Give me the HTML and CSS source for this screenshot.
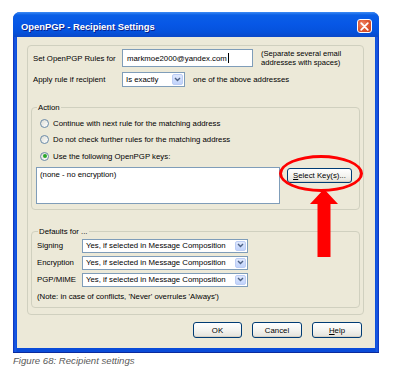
FILE: index.html
```html
<!DOCTYPE html>
<html>
<head>
<meta charset="utf-8">
<title>OpenPGP - Recipient Settings</title>
<link rel="stylesheet" href="styles.css">
</head>
<body>
<div class="figure">
  <div class="window">
    <div class="titlebar">
      <span class="title">OpenPGP - Recipient Settings</span>
      <span class="close"><svg width="9" height="9" viewBox="0 0 9 9"><path d="M1.2 1.2L7.8 7.8M7.8 1.2L1.2 7.8" stroke="#fff" stroke-width="1.7" stroke-linecap="round"/></svg></span>
    </div>
    <div class="client">
      <div class="outer">
        <div class="rulegrid">
          <span class="lbl">Set OpenPGP Rules for</span>
          <div class="input">markmoe2000@yandex.com<span class="caret"></span></div>
          <span class="hint">(Separate several email<br>addresses with spaces)</span>
          <span class="lbl">Apply rule if recipient</span>
          <div class="apply">
            <div class="select small"><span class="val">Is exactly</span><span class="dd"><svg width="7" height="5" viewBox="0 0 7 5"><path d="M1 1L3.5 3.5L6 1" stroke="#4d6185" stroke-width="1.4" fill="none"/></svg></span></div>
            <span>one of the above addresses</span>
          </div>
        </div>
        <fieldset class="group action">
          <legend>Action</legend>
          <div class="radio"><span class="rb"></span><span>Continue with next rule for the matching address</span></div>
          <div class="radio"><span class="rb"></span><span>Do not check further rules for the matching address</span></div>
          <div class="radio"><span class="rb on"></span><span>Use the following OpenPGP keys:</span></div>
          <div class="keys">
            <div class="listbox">(none - no encryption)</div>
            <div class="btn selkey"><u>S</u>elect Key(s)...</div>
          </div>
        </fieldset>
        <fieldset class="group defaults">
          <legend>Defaults for ...</legend>
          <div class="defgrid">
            <span>Signing</span>
            <div class="select wide"><span class="val">Yes, if selected in Message Composition</span><span class="dd"><svg width="7" height="5" viewBox="0 0 7 5"><path d="M1 1L3.5 3.5L6 1" stroke="#4d6185" stroke-width="1.4" fill="none"/></svg></span></div>
            <span>Encryption</span>
            <div class="select wide"><span class="val">Yes, if selected in Message Composition</span><span class="dd"><svg width="7" height="5" viewBox="0 0 7 5"><path d="M1 1L3.5 3.5L6 1" stroke="#4d6185" stroke-width="1.4" fill="none"/></svg></span></div>
            <span>PGP/MIME</span>
            <div class="select wide"><span class="val">Yes, if selected in Message Composition</span><span class="dd"><svg width="7" height="5" viewBox="0 0 7 5"><path d="M1 1L3.5 3.5L6 1" stroke="#4d6185" stroke-width="1.4" fill="none"/></svg></span></div>
          </div>
          <div class="note">(Note: in case of conflicts, 'Never' overrules 'Always')</div>
        </fieldset>
      </div>
      <div class="buttons">
        <div class="btn dlg">OK</div>
        <div class="btn dlg">Cancel</div>
        <div class="btn dlg"><u>H</u>elp</div>
      </div>
    </div>
  </div>
  <div class="caption">Figure 68: Recipient settings</div>
  <div class="ring"></div>
  <svg class="arrow" width="30" height="70" viewBox="0 0 30 70"><path d="M15 0L29 15H21.5V68H8.5V15H1Z" fill="#f00"/></svg>
</div>
</body>
</html>
```
FILE: styles.css
```css
body {
  margin: 0;
  background: #fff;
  font-family: "Liberation Sans", Arial, sans-serif;
  font-size: 7.8px;
  color: #000;
}
.figure {
  position: relative;
  width: 394px;
  height: 373px;
  padding: 12px 0 0 13px;
  box-sizing: border-box;
}
.window {
  width: 366px;
  height: 341px;
  box-sizing: border-box;
  padding: 0 4px 5px 4px;
  border-radius: 7px 7px 0 0;
  background: linear-gradient(to right, #0a2fb8 0, #1a5ce6 2px, #0a4bd8 4px, #0a4bd8 calc(100% - 4px), #1a5ce6 calc(100% - 2px), #0a2fb8 100%);
  box-shadow: inset 0 -1px 0 #0a2a9c;
  display: flex;
  flex-direction: column;
}
.titlebar {
  height: 25px;
  flex: none;
  margin: 0 -4px;
  padding: 3px 7px 0 8px;
  box-sizing: border-box;
  border-radius: 7px 7px 0 0;
  background: linear-gradient(#3d8cf5 0, #0a5fe6 3px, #0757e6 12px, #0552dc 20px, #0a48c8 25px);
  display: flex;
  align-items: center;
  justify-content: space-between;
}
.title {
  color: #fff;
  font-weight: bold;
  font-size: 9.4px;
  text-shadow: 1px 1px 0 #0a1f8a;
}
.close {
  width: 15px;
  height: 14px;
  box-sizing: border-box;
  border: 1px solid #fff;
  border-radius: 3px;
  background: radial-gradient(circle at 35% 35%, #f08a6a 0, #e05a34 45%, #c7401c 100%);
  display: flex;
  align-items: center;
  justify-content: center;
}
.client {
  flex: 1;
  background: #ece9d8;
  padding: 8px 13px 10px 10px;
  display: flex;
  flex-direction: column;
}
.outer {
  width: 337px;
  height: 270px;
  box-sizing: border-box;
  border: 1px solid #d0d0bf;
  border-radius: 4px;
  padding: 3px 3px 0 3px;
  display: flex;
  flex-direction: column;
}
.rulegrid {
  display: grid;
  grid-template-columns: 81px 131px auto;
  column-gap: 8px;
  row-gap: 5px;
  padding-left: 2px;
  align-items: center;
}
.lbl { white-space: nowrap; }
.input {
  height: 18px;
  box-sizing: border-box;
  border: 1px solid #7f9db9;
  background: #fff;
  padding-left: 4px;
  display: flex;
  align-items: center;
}
.caret {
  display: inline-block;
  width: 1px;
  height: 10px;
  background: #000;
  margin-left: 1px;
}
.hint {
  font-size: 7.6px;
  line-height: 9px;
}
.apply {
  grid-column: 2 / 4;
  display: flex;
  align-items: center;
  gap: 8px;
  white-space: nowrap;
}
.select {
  box-sizing: border-box;
  border: 1px solid #7f9db9;
  background: #fff;
  display: flex;
  align-items: center;
  padding: 1px;
}
.select .val {
  flex: 1;
  padding-left: 2px;
  white-space: nowrap;
  overflow: hidden;
}
.select.small { width: 63px; height: 15px; }
.select.wide { width: 166px; height: 14px; }
.dd {
  width: 11px;
  align-self: stretch;
  box-sizing: border-box;
  border: 1px solid #bccdf5;
  border-radius: 2px;
  background: linear-gradient(#dfe8fd, #c1d3fb);
  display: flex;
  align-items: center;
  justify-content: center;
}
.group {
  margin: 0;
  border: 1px solid #d0d0bf;
  border-radius: 4px;
  padding: 0 7px 5px 4px;
}
.group legend {
  padding: 0 1px;
  margin-left: 1px;
  line-height: 9px;
}
.action {
  margin-top: 16px;
}
.radio {
  display: flex;
  align-items: center;
  gap: 4px;
  margin-left: 4px;
  height: 16.5px;
}
.radio:first-of-type { margin-top: 3px; }
.rb {
  width: 9px;
  height: 9px;
  box-sizing: border-box;
  border-radius: 50%;
  border: 1px solid #6a8aa8;
  background: linear-gradient(135deg, #dcdcd4, #ffffff);
  display: flex;
  align-items: center;
  justify-content: center;
}
.rb.on::after {
  content: "";
  width: 4px;
  height: 4px;
  border-radius: 50%;
  background: #2aa82a;
}
.keys {
  display: flex;
  align-items: flex-start;
  gap: 7px;
  margin-top: 2px;
}
.listbox {
  width: 244px;
  height: 37px;
  box-sizing: border-box;
  border: 1px solid #7f9db9;
  background: #fff;
  padding: 2px 3px;
}
.btn {
  box-sizing: border-box;
  border: 1px solid #003c74;
  border-radius: 3px;
  background: linear-gradient(#ffffff 0, #f4f4f0 50%, #e3e2da 100%);
  box-shadow: inset 0 -1px 0 #d6d0c5;
  display: flex;
  align-items: center;
  justify-content: center;
  white-space: nowrap;
}
.selkey {
  width: 65px;
  height: 15px;
  margin-top: 1px;
}
.defaults {
  margin-top: 17px;
  padding-left: 5px;
}
.defgrid {
  display: grid;
  grid-template-columns: 45px 166px;
  row-gap: 3px;
  align-items: center;
  margin-top: 3px;
}
.note {
  margin-top: 5px;
  line-height: 10px;
}
.buttons {
  display: flex;
  justify-content: flex-end;
  gap: 10px;
  margin-top: 7px;
}
.dlg {
  width: 50px;
  height: 16px;
}
.dlg:first-child { width: 49px; }
.caption {
  margin-top: 2px;
  font-style: italic;
  font-size: 9.6px;
  color: #5a5a5a;
}
.ring {
  position: absolute;
  left: 279px;
  top: 155px;
  width: 84px;
  height: 37px;
  box-sizing: border-box;
  border: 3px solid #f00;
  border-radius: 50%;
}
.arrow {
  position: absolute;
  left: 309px;
  top: 189px;
}
```
